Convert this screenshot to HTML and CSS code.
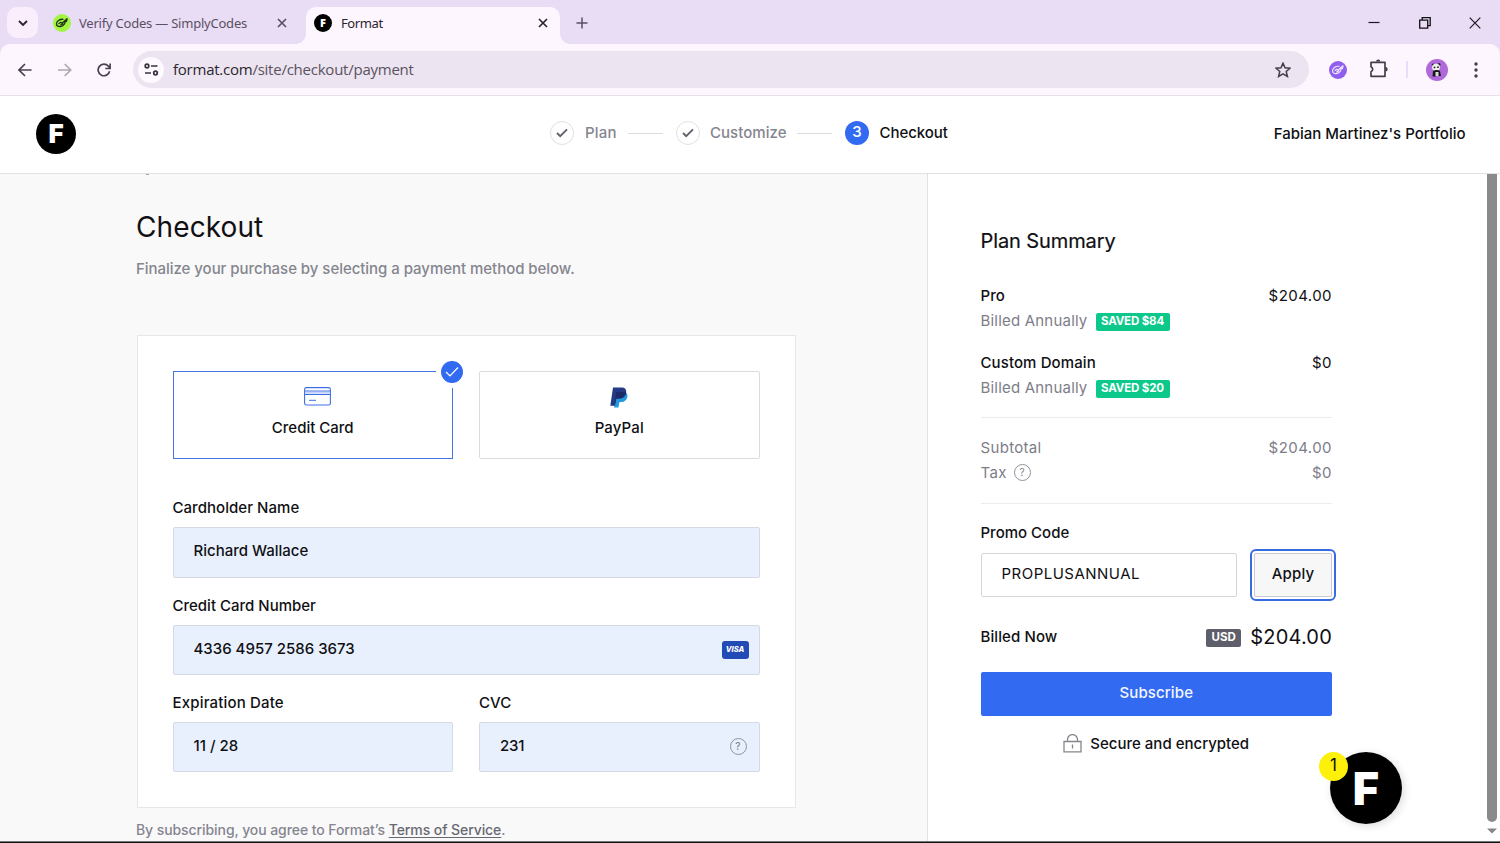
FILE: index.html
```html
<!DOCTYPE html>
<html lang="en">
<head>
<meta charset="utf-8">
<title>Format</title>
<link rel="stylesheet" href="styles.css">
</head>
<body>
<div class="window">
  <div class="tabstrip">
    <div class="tab-search"><svg width="12" height="12" viewBox="0 0 12 12"><path d="M2 4l4 4 4-4" fill="none" stroke="#2b2430" stroke-width="1.9"/></svg></div>
    <div class="tab">
      <svg class="favicon" width="18" height="18" viewBox="0 0 18 18"><circle cx="9" cy="9" r="9" fill="#a3f542"/><g fill="none" stroke="#20321a" stroke-width="1.300" stroke-linecap="round" stroke-linejoin="round"><path d="M10 5.300C6.500 5 3.500 7.500 3.500 10c0 2.800 3.800 3.300 6.500 1.500 1.500-1 2.200-2 2-3.300"/><path d="M6 9.500l1.800-1.300 1.200 1L14 4.800l-.5 2.500-2.500.7M7.500 11l2.500-1"/></g></svg>
      <span class="tab-title title-long">Verify Codes — SimplyCodes</span>
      <svg class="tab-close" width="10" height="10" viewBox="0 0 10 10"><path d="M1 1l8 8M9 1l-8 8" stroke="#5b5063" stroke-width="1.7"/></svg>
    </div>
    <div class="tab tab-active">
      <span class="f-mark f-small">F</span>
      <span class="tab-title title-short">Format</span>
      <svg class="tab-close" width="10" height="10" viewBox="0 0 10 10"><path d="M1 1l8 8M9 1l-8 8" stroke="#2b2430" stroke-width="1.7"/></svg>
    </div>
    <svg class="new-tab" width="12" height="12" viewBox="0 0 12 12"><path d="M6 .5v11M.5 6h11" stroke="#5b4e64" stroke-width="1.5"/></svg>
    <div class="window-controls">
      <svg width="12" height="12" viewBox="0 0 12 12"><path d="M.5 5.500h11" stroke="#1c1820" stroke-width="1.2"/></svg>
      <svg width="12" height="12" viewBox="0 0 12 12"><path d="M.7 3.200h8v8h-8zM3.200 3V.7h8v8H9" fill="none" stroke="#111" stroke-width="1.3"/></svg>
      <svg width="12" height="12" viewBox="0 0 12 12"><path d="M.7.7l10.600 10.600M11.300.7L.7 11.300" stroke="#1c1820" stroke-width="1.2"/></svg>
    </div>
  </div>

  <div class="toolbar">
    <div class="nav">
      <svg width="14" height="14" viewBox="0 0 14 14"><path d="M13.500 7H1.200M7 1L1 7l6 6" fill="none" stroke="#4a4150" stroke-width="1.7"/></svg>
      <svg width="14" height="14" viewBox="0 0 14 14"><path d="M0 7h12.500M6.700 1l6 6-6 6" fill="none" stroke="#aea5b3" stroke-width="1.700"/></svg>
      <svg width="14" height="14" viewBox="0 0 14 14"><path d="M12.600 8.200A5.800 5.800 0 1 1 11.400 3.200L13 5M13.100.5v5H8.300" fill="none" stroke="#4a4150" stroke-width="1.700"/></svg>
    </div>
    <div class="omnibox">
      <div class="site-info"><svg width="15" height="13" viewBox="0 0 15 13" fill="none" stroke="#39323e" stroke-width="1.700"><circle cx="3" cy="3" r="1.800"/><path d="M7 3h6.500M1 10h6"/><circle cx="11.500" cy="10" r="1.800"/></svg></div>
      <div class="url">format.com<span>/site/checkout/payment</span></div>
      <svg width="16" height="16" viewBox="0 0 16 16"><path d="M8 1.200l2 4.600 5 .4-3.800 3.300 1.200 4.900L8 11.800l-4.400 2.600 1.200-4.900L1 6.200l5-.4z" fill="none" stroke="#443c4a" stroke-width="1.500"/></svg>
    </div>
    <div class="actions">
      <svg width="18" height="18" viewBox="0 0 18 18"><circle cx="9" cy="9" r="9" fill="#8f60ee"/><g fill="none" stroke="#f1e6ff" stroke-width="1.200" stroke-linecap="round" stroke-linejoin="round"><path d="M10 5.300C6.500 5 3.500 7.500 3.500 10c0 2.800 3.800 3.300 6.500 1.500 1.500-1 2.200-2 2-3.300"/><path d="M6 9.500l1.800-1.300 1.200 1L14 4.800l-.5 2.500-2.500.7M7.500 11l2.500-1"/></g></svg>
      <svg class="ext" width="19" height="19" viewBox="0 0 19 19"><path d="M2 3.300h14v14H2v-4.500a2.700 2.700 0 0 0 0-5z" fill="none" stroke="#443c4a" stroke-width="1.700" stroke-linejoin="round"/><path d="M7 2.600a2.200 2.200 0 0 1 4.400 0zM16.500 8a2.200 2.200 0 0 1 0 4.400z" fill="#443c4a"/></svg>
      <span class="divider"></span>
      <svg class="avatar" width="22" height="22" viewBox="0 0 22 22"><circle cx="11" cy="11" r="11" fill="#b069d9"/><circle cx="7.200" cy="6" r="1.500" fill="#222"/><circle cx="13" cy="5.500" r="1.500" fill="#222"/><ellipse cx="10" cy="8.200" rx="4" ry="3.500" fill="#eee"/><circle cx="8.500" cy="8.400" r=".9" fill="#222"/><circle cx="12" cy="8.200" r=".9" fill="#222"/><path d="M7 12q4-2 7 0l1 5h-3v-3h-2v3.500H6.500z" fill="#181818"/><path d="M9.500 13h3v4h-3z" fill="#ddd"/></svg>
      <svg width="4" height="16" viewBox="0 0 4 16" fill="#443c4a"><circle cx="2" cy="2" r="1.700"/><circle cx="2" cy="8" r="1.700"/><circle cx="2" cy="14" r="1.700"/></svg>
    </div>
  </div>

  <header class="site-header">
    <span class="f-mark f-medium">F</span>
    <nav class="steps">
      <span class="step-dot"><svg width="12" height="10" viewBox="0 0 12 10"><path d="M1 5l3.200 3.200L11 1.300" fill="none" stroke="#61616c" stroke-width="1.900"/></svg></span>
      <span class="step-name name-plan">Plan</span>
      <span class="step-line"></span>
      <span class="step-dot"><svg width="12" height="10" viewBox="0 0 12 10"><path d="M1 5l3.200 3.200L11 1.300" fill="none" stroke="#61616c" stroke-width="1.900"/></svg></span>
      <span class="step-name name-customize">Customize</span>
      <span class="step-line"></span>
      <span class="step-dot step-current">3</span>
      <span class="step-name name-current">Checkout</span>
    </nav>
    <span class="portfolio">Fabian Martinez's Portfolio</span>
  </header>

  <div class="content">
    <main class="payment">
      <span class="scrolled-mark"></span>
      <h1>Checkout</h1>
      <p class="lead">Finalize your purchase by selecting a payment method below.</p>
      <section class="card">
        <div class="methods">
          <div class="method method-selected">
            <svg width="27" height="19" viewBox="0 0 27 19" fill="none" stroke="#3f6fe6"><rect x=".6" y=".6" width="25.800" height="17.400" rx="1.800" fill="#fff" stroke-width="1.100"/><path d="M1 5.700h25" stroke="#c5d4fa" stroke-width="2"/><path d="M1 4h25M1 7.500h25M5 13.300h7"/></svg>
            <span>Credit Card</span>
            <span class="selected-badge"><svg width="14" height="12" viewBox="0 0 14 12"><path d="M1 6l4 4L13 1.500" fill="none" stroke="#fff" stroke-width="1.200"/></svg></span>
          </div>
          <div class="method">
            <svg width="18" height="21" viewBox="0 0 18 21"><path d="M6 5h9.500c2.500 1.800 2.500 5 .8 7.500-1.500 2.200-3.800 2.700-7 2.700l-.8 5.300H4z" fill="#2199dc"/><path d="M3 .4h8c4.200 0 5.800 2 5 5.600-.9 4.200-3.600 5.600-7.600 5.600H6.300L4.800 18.800H.3z" fill="#243a85"/><path d="M6 5h9.900v1c-.9 4.200-3.600 5.600-7.500 5.600H6.300L4.800 18.800z" fill="#1d2a68"/></svg>
            <span class="paypal-name">PayPal</span>
          </div>
        </div>
        <label class="label label-name">Cardholder Name</label>
        <div class="field field-name">Richard Wallace</div>
        <label class="label label-number">Credit Card Number</label>
        <div class="field">4336 4957 2586 3673<span class="visa">VISA</span></div>
        <div class="pair">
          <div><label class="label label-expiry">Expiration Date</label><div class="field">11 / 28</div></div>
          <div><label class="label label-cvc">CVC</label><div class="field field-cvc">231<span class="help">?</span></div></div>
        </div>
      </section>
      <p class="terms">By subscribing, you agree to Format’s <a>Terms of Service</a>.</p>
    </main>

    <aside class="summary">
      <h2>Plan Summary</h2>
      <div class="row"><span>Pro</span><span class="price">$204.00</span></div>
      <div class="row muted"><span>Billed Annually</span><span class="saved">SAVED $84</span></div>
      <div class="row row-next"><span>Custom Domain</span><span class="price price-zero">$0</span></div>
      <div class="row muted"><span>Billed Annually</span><span class="saved">SAVED $20</span></div>
      <div class="totals">
        <div class="row muted"><span class="subtotal">Subtotal</span><span class="price">$204.00</span></div>
        <div class="row muted"><span class="tax">Tax</span><span class="help">?</span><span class="price price-zero">$0</span></div>
      </div>
      <label class="label promo-label">Promo Code</label>
      <div class="promo"><div class="promo-input">PROPLUSANNUAL</div><div class="apply">Apply</div></div>
      <div class="row due"><span>Billed Now</span><span class="usd">USD</span><span class="amount">$204.00</span></div>
      <div class="subscribe">Subscribe</div>
      <div class="secure"><svg width="19" height="19" viewBox="0 0 19 19" fill="none" stroke="#85858c" stroke-width="1.300"><path d="M1 7.500h17v10.300H1zM4.500 7.500V5.600a5 5 0 0 1 10 0v1.900M9.500 10.500v4"/></svg><span>Secure and encrypted</span></div>
    </aside>
    <div class="scrollbar"><span class="thumb"></span><svg width="10" height="6" viewBox="0 0 10 6"><path d="M0 .5h10L5 5.500z" fill="#858585"/></svg></div>
  </div>
  <div class="bottom-edge"></div>
  <div class="chat"><span class="f-mark f-large">F</span><span class="chat-count">1</span></div>
</div>
</body>
</html>
```
FILE: styles.css
```css
* { box-sizing: border-box; }
body {
  margin: 0;
  font: 500 15px/20px Inter, "Liberation Sans", sans-serif;
  color: #101014;
  overflow: hidden;
}
h1, h2, p { margin: 0; }
svg { display: block; flex: none; }
.window { position: relative; width: 1500px; height: 843px; display: flex; flex-direction: column; background: #fff; }

/* Browser tabs */
.tabstrip { height: 44px; flex: none; display: flex; align-items: center; background: #e9dcf5; font: 400 13px/18px "Noto Sans", "Open Sans", sans-serif; }
.tab-search { width: 31px; height: 31px; margin: 1px 15px 0 7px; border-radius: 10px; background: #faeefd; display: flex; align-items: center; justify-content: center; }
.tab { width: 253px; height: 37px; margin-top: 7px; padding: 0 19px 5px 0; display: flex; align-items: center; color: #5b5063; }
.tab-title { flex: 1; margin-left: 8px; white-space: nowrap; }
.title-long { letter-spacing: -.22px; }
.title-short { margin-left: 9px; letter-spacing: -.38px; }
.tab-active { position: relative; width: 254px; padding: 0 12px 5px 8px; border-radius: 10px 10px 0 0; background: #fef6ff; color: #2b2430; }
.tab-active::before, .tab-active::after { content: ""; position: absolute; bottom: 0; width: 10px; height: 10px; }
.tab-active::before { left: -10px; background: radial-gradient(circle at 0 0, #e9dcf5 9.5px, #fef6ff 10px); }
.tab-active::after { right: -10px; background: radial-gradient(circle at 100% 0, #e9dcf5 9.5px, #fef6ff 10px); }
.new-tab { margin: 1px 0 0 16px; }
.window-controls { margin: 1px 19px 0 auto; display: flex; gap: 38.5px; }

/* Address bar */
.toolbar { height: 52px; flex: none; display: flex; align-items: center; border-bottom: 1px solid #e9dfea; background: linear-gradient(#e9dcf5, #e9dcf5) top / 100% 10px no-repeat; position: relative; z-index: 0; }
.toolbar::before { content: ""; position: absolute; z-index: -1; inset: 0; border-radius: 10px 10px 0 0; background: #fef6ff; }
.nav { width: 133px; padding-left: 18px; display: flex; gap: 25.5px; }
.omnibox { width: 1176px; height: 37px; padding: 0 18px 0 5px; display: flex; align-items: center; border-radius: 19px; background: #ece4f0; }
.site-info { width: 26px; height: 26px; border-radius: 50%; background: #fef8ff; display: flex; align-items: center; justify-content: center; }
.url { flex: 1; margin: -1px 0 0 9px; font: 400 15px/20px "Open Sans", "Noto Sans", sans-serif; letter-spacing: -.24px; color: #2b2630; }
.url span { color: #5a5260; }
.actions { display: flex; align-items: center; margin-left: 20px; }
.ext { margin: -2px 0 0 22px; }
.divider { width: 2px; height: 17px; margin: 0 18px 0 18px; background: #eadcfb; }
.avatar { margin-right: 26px; }

/* Format mark */
.f-mark { display: flex; flex: none; align-items: center; justify-content: center; border-radius: 50%; background: #000; color: #fff; font-weight: 900; line-height: 1; }
.f-small { width: 18px; height: 18px; margin-top: -1px; font-size: 11px; }
.f-medium { width: 40px; height: 40px; margin-top: -1px; font-size: 26px; }
.f-large { width: 72px; height: 72px; font-size: 45px; }

/* Site header */
.site-header { height: 78px; flex: none; padding: 0 34.5px 0 36px; display: flex; align-items: center; border-bottom: 1px solid #e2e2e4; }
.steps { margin: -3px 0 0 474px; display: flex; align-items: center; }
.step-dot { width: 24px; height: 24px; border: 1px solid #e0e0e4; border-radius: 50%; display: flex; align-items: center; justify-content: center; }
.step-current { border: 0; background: #336af2; color: #fff; padding-bottom: 3px; }
.step-name { margin-left: 11px; color: #85858f; }
.name-plan { width: 43px; letter-spacing: .2px; }
.name-customize { width: 87px; margin-left: 10px; letter-spacing: .05px; }
.name-current { margin-left: 10.5px; color: #101014; letter-spacing: -.05px; }
.step-line { width: 35px; height: 1px; margin-right: 13px; background: #dcdce0; }
.portfolio { margin: -2px 0 0 auto; }

/* Columns */
.content { flex: 1; min-height: 0; display: flex; }
.payment { width: 927px; padding: 0 0 0 136px; background: #f9f9f9; overflow: hidden; }
.scrolled-mark { display: block; width: 3px; height: 1px; margin-left: 10px; background: #a5a5aa; }
h1 { margin-top: 34px; font-weight: 400; font-size: 28px; line-height: 36px; letter-spacing: .1px; }
.lead { margin-top: 14px; line-height: 20px; letter-spacing: -.04px; color: #85858f; }
.card { width: 659px; height: 473px; margin: 56px 0 0 .5px; padding: 35px; border: 1px solid #e7e7ea; background: #fff; }
.methods { display: flex; gap: 26px; }
.method { position: relative; width: 280.5px; height: 88px; padding-top: 15px; display: flex; flex-direction: column; align-items: center; border: 1px solid #dcdce0; border-radius: 2px; }
.method > span:not(.selected-badge) { position: relative; margin-top: auto; margin-bottom: 20px; }
.method-selected { border-color: #4674e0; border-radius: 0; }
.method-selected > svg { margin-left: 10px; }
.paypal-name { letter-spacing: .12px; }
.selected-badge { position: absolute; right: -16px; top: -16px; width: 32px; height: 32px; background: #fff; display: flex; align-items: center; justify-content: center; }
.selected-badge::before { content: ""; position: absolute; width: 22px; height: 22px; border-radius: 50%; background: #336af2; }
.selected-badge svg { position: relative; }
.label { display: block; height: 20px; }
.label-name { margin-top: 39px; letter-spacing: .05px; }
.label-number { margin-top: 18px; }
.label-expiry { letter-spacing: .17px; }
.label-cvc { letter-spacing: .05px; }
.field { position: relative; height: 50px; margin-top: 9px; padding: 0 10px 2px 20px; display: flex; align-items: center; border: 1px solid #d5d9e5; border-radius: 2px; background: #e8f0fe; }
.field-name { height: 51px; padding-bottom: 3px; }
.visa { width: 27px; height: 18px; margin: 2px 0 0 auto; border-radius: 3px; background: #234bb5; color: #fff; font: italic 800 7.5px/18px Inter, sans-serif; text-align: center; }
.pair { display: grid; grid-template-columns: 1fr 1fr; gap: 26px; margin-top: 18px; }
.pair .field { margin-top: 8.5px; }
.help { width: 17px; height: 17px; border: 1px solid #92929c; border-radius: 50%; color: #85858f; font-size: 10px; line-height: 15px; text-align: center; letter-spacing: 0; }
.field .help { margin: 1px 2px 0 auto; }
.field-cvc { letter-spacing: -.2px; }
.terms { margin-top: 12px; font-size: 14px; letter-spacing: -.08px; color: #85858f; }
.terms a { color: #686873; text-decoration: underline; text-underline-offset: 2px; }

/* Plan summary */
.summary { width: 560px; padding: 54px 155px 0 52.5px; border-left: 1px solid #e2e2e4; }
h2 { font-weight: 400; font-size: 20px; line-height: 26px; letter-spacing: -.1px; margin-bottom: 29px; -webkit-text-stroke: .2px; }
.row { height: 25px; display: flex; align-items: center; letter-spacing: .1px; }
.muted { color: #7d7d88; font-weight: 400; letter-spacing: .2px; }
.price { margin-left: auto; font-weight: 400; letter-spacing: .45px; }
.row-next { margin-top: 17px; }
.saved, .usd { height: 18px; border-radius: 2px; color: #fff; font-weight: 700; font-size: 11.5px; line-height: 17px; text-align: center; }
.saved { width: 74px; margin: 3px 0 0 8px; background: #0cc98b; letter-spacing: -.15px; }
.totals { height: 87px; margin-top: 17px; padding-top: 17px; border: solid #ececef; border-width: 1px 0; }
.totals .help { margin: -1px 0 0 7px; }
.tax, .subtotal { letter-spacing: .32px; }
.promo-label { margin-top: 19px; }
.promo { display: flex; justify-content: space-between; margin-top: 9.5px; }
.promo-input { width: 256px; height: 44px; padding: 0 0 2px 20px; line-height: 40px; border: 1px solid #d6d6da; border-radius: 2px; font-weight: 400; letter-spacing: .48px; }
.apply { width: 78px; height: 44px; border: 1px solid #c9c9cf; border-radius: 2px; background: #f7f7f8; outline: 2px solid #376be0; outline-offset: 2px; line-height: 40px; text-align: center; letter-spacing: .2px; }
.due { margin-top: 28px; }
.usd { width: 35px; margin: 1px 9px 0 auto; background: #5f5f6b; }
.amount { font-weight: 400; font-size: 20px; letter-spacing: .2px; }
.subscribe { height: 44px; margin-top: 22.5px; border-radius: 2px; background: #336af2; color: #f4f7ff; line-height: 42px; text-align: center; letter-spacing: .12px; }
.secure { display: flex; justify-content: center; gap: 8px; margin-top: 18px; }

/* Scrollbar and window edge */
.scrollbar { width: 13px; display: flex; flex-direction: column; align-items: center; padding-right: 3px; }
.thumb { width: 10px; height: 648px; margin-bottom: 6px; border-radius: 0 0 5px 5px; background: #8a8a8a; }
.bottom-edge { flex: none; height: 2px; background: #111; border-top: 1px solid #777; }

/* Floating chat launcher */
.chat { position: absolute; left: 1330px; top: 752px; border-radius: 50%; box-shadow: 2px 2px 8px rgba(0, 0, 0, .14); }
.chat-count { position: absolute; left: -11px; top: 0; width: 29px; height: 29px; border-radius: 50%; background: #fdf00b; font: 400 17px/27px Inter, sans-serif; text-align: center; }
```
